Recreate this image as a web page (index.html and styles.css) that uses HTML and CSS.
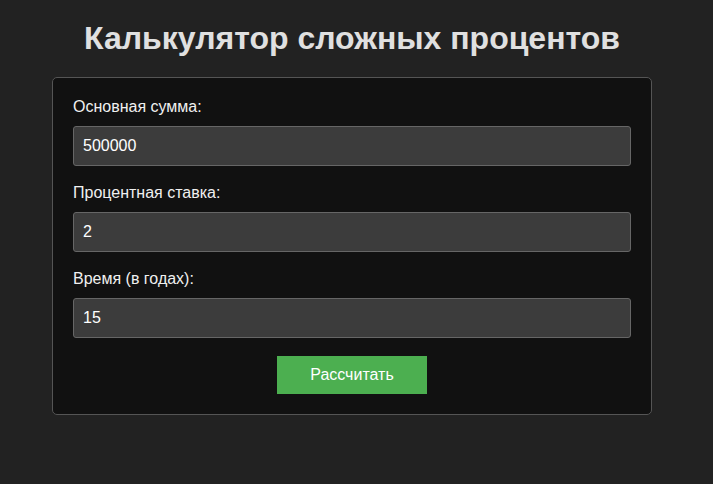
FILE: index.html
```html
<!DOCTYPE html>
<html lang="ru">
<head>
<meta charset="utf-8">
<title>Калькулятор сложных процентов</title>
<link rel="stylesheet" href="styles.css">
</head>
<body>
<h1 class="title">Калькулятор сложных процентов</h1>
<form class="card">
  <label class="label" for="p">Основная сумма:</label>
  <input class="field" id="p" type="text" value="500000">
  <label class="label" for="r">Процентная ставка:</label>
  <input class="field" id="r" type="text" value="2">
  <label class="label" for="t">Время (в годах):</label>
  <input class="field" id="t" type="text" value="15">
  <div class="actions"><button class="btn" type="button">Рассчитать</button></div>
</form>
</body>
</html>
```
FILE: styles.css
```css
html, body { margin: 0; padding: 0; }
body {
  background: #222222;
  font-family: "Liberation Sans", Arial, sans-serif;
  color: #e0e0e0;
  padding: 20px 9px 20px 0;
}
.title {
  margin: 0 0 20px;
  text-align: center;
  font-size: 32px;
  font-weight: bold;
  color: #e0e0e0;
  line-height: 37px;
}
.card {
  width: 558px;
  margin: 0 auto;
  background: #111111;
  border: 1px solid #555;
  border-radius: 5px;
  padding: 20px;
  display: flex;
  flex-direction: column;
}
.label {
  display: block;
  font-size: 16px;
  line-height: 18px;
  color: #f0f0f0;
  margin-bottom: 10px;
}
.field {
  box-sizing: border-box;
  width: 100%;
  height: 40px;
  margin: 0 0 18px;
  padding: 0 9px;
  background: #3c3c3c;
  border: 1px solid #666;
  border-radius: 3px;
  color: #ffffff;
  font-family: "Liberation Sans", Arial, sans-serif;
  font-size: 16px;
}
.actions { display: flex; justify-content: center; }
.btn {
  width: 150px;
  height: 38px;
  background: #4caf50;
  color: #ffffff;
  border: none;
  font-family: "Liberation Sans", Arial, sans-serif;
  font-size: 16px;
  cursor: pointer;
}
```
